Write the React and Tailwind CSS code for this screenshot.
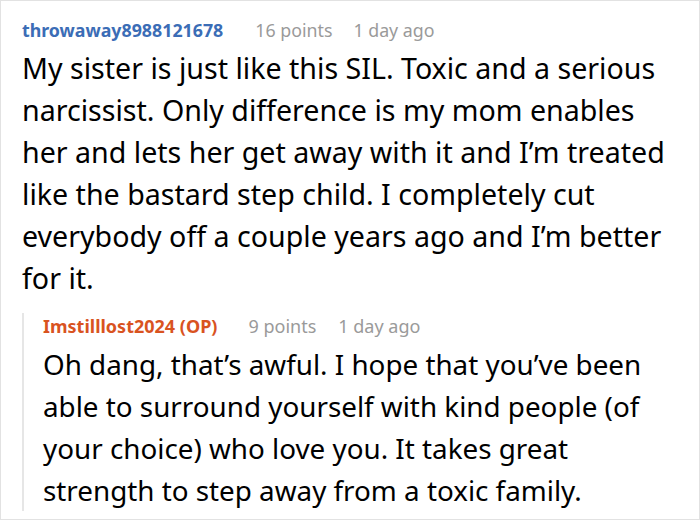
const comment = {
  author: 'throwaway8988121678',
  points: '16 points',
  time: '1 day ago',
  body: 'My sister is just like this SIL. Toxic and a serious narcissist. Only difference is my mom enables her and lets her get away with it and I’m treated like the bastard step child. I completely cut everybody off a couple years ago and I’m better for it.',
}

const reply = {
  author: 'Imstilllost2024 (OP)',
  points: '9 points',
  time: '1 day ago',
  body: 'Oh dang, that’s awful. I hope that you’ve been able to surround yourself with kind people (of your choice) who love you. It takes great strength to step away from a toxic family.',
}

export default function App() {
  return (
    <div className="w-[700px] h-[520px] overflow-hidden bg-white border border-[#e2e2e2] font-['Noto_Sans','Open_Sans',sans-serif] text-black">
      {/* comment */}
      <div className="pl-[21px] pr-4 pt-[16px]">
        <div className="flex items-baseline text-[17.8px] leading-[26px]">
          <span className="font-bold text-[#3b6db6]">{comment.author}</span>
          <span className="ml-[32px] text-[#9a9a9a]">{comment.points}</span>
          <span className="ml-[21px] text-[#9a9a9a]">{comment.time}</span>
        </div>
        <p className="mt-[4px] text-[28.6px] leading-[42px]">{comment.body}</p>
      </div>

      {/* reply */}
      <div className="ml-[21px] mt-[14px] border-l-2 border-[#e6e6e6] pl-[19px] pr-4">
        <div className="flex items-baseline text-[18px] leading-[26px]">
          <span className="font-bold text-[#d9531f]">{reply.author}</span>
          <span className="ml-[31px] text-[#9a9a9a]">{reply.points}</span>
          <span className="ml-[22px] text-[#9a9a9a]">{reply.time}</span>
        </div>
        <p className="mt-[4px] text-[27.8px] leading-[42px]">{reply.body}</p>
      </div>
    </div>
  )
}
